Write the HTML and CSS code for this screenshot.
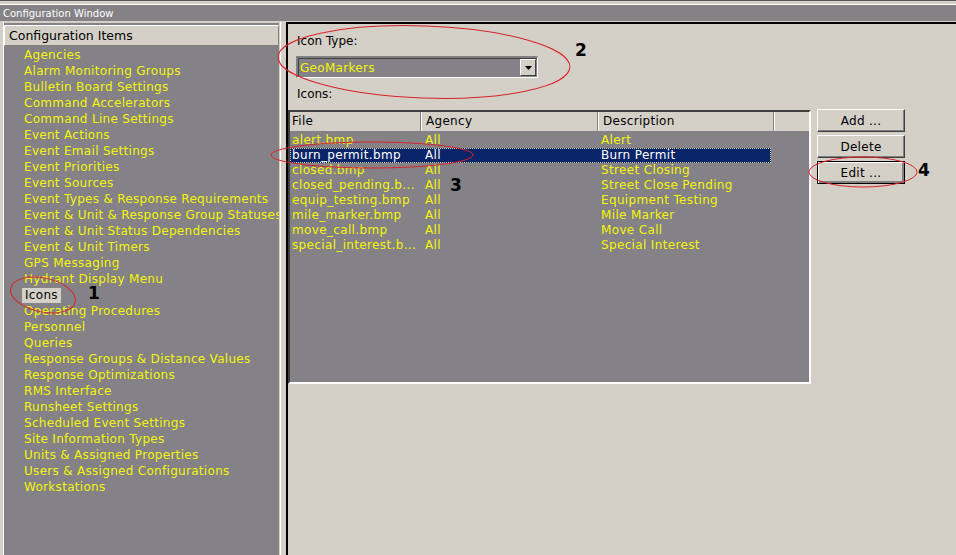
FILE: index.html
```html
<!DOCTYPE html>
<html lang="en">
<head>
    <meta charset="UTF-8">
    <title>Configuration Window</title>
    <link rel="stylesheet" href="styles.css">
</head>
<body>
    <div class="window">
        <div class="top-edge"></div>
        <div class="titlebar">Configuration Window</div>
        <div class="main">
            <div class="left-pane">
                <div class="pane-header">Configuration Items</div>
                <ul class="items">
                    <li>Agencies</li>
                    <li>Alarm Monitoring Groups</li>
                    <li>Bulletin Board Settings</li>
                    <li>Command Accelerators</li>
                    <li>Command Line Settings</li>
                    <li>Event Actions</li>
                    <li>Event Email Settings</li>
                    <li>Event Priorities</li>
                    <li>Event Sources</li>
                    <li>Event Types &amp; Response Requirements</li>
                    <li>Event &amp; Unit &amp; Response Group Statuses</li>
                    <li>Event &amp; Unit Status Dependencies</li>
                    <li>Event &amp; Unit Timers</li>
                    <li>GPS Messaging</li>
                    <li>Hydrant Display Menu</li>
                    <li><span class="selected-item">Icons</span></li>
                    <li>Operating Procedures</li>
                    <li>Personnel</li>
                    <li>Queries</li>
                    <li>Response Groups &amp; Distance Values</li>
                    <li>Response Optimizations</li>
                    <li>RMS Interface</li>
                    <li>Runsheet Settings</li>
                    <li>Scheduled Event Settings</li>
                    <li>Site Information Types</li>
                    <li>Units &amp; Assigned Properties</li>
                    <li>Users &amp; Assigned Configurations</li>
                    <li>Workstations</li>
                </ul>
            </div>
            <div class="splitter"></div>
            <div class="right-pane">
                <div class="field-label first">Icon Type:</div>
                <div class="combo">
                    <span class="combo-text">GeoMarkers</span>
                    <span class="combo-btn">
                        <svg width="7" height="4" viewBox="0 0 7 4"><path d="M0 0h7L3.5 4z" fill="#000"/></svg>
                    </span>
                </div>
                <div class="field-label icons-label">Icons:</div>
                <div class="list-row">
                    <div class="listview">
                        <div class="lv-header">
                            <div class="col c1">File</div>
                            <div class="col c2">Agency</div>
                            <div class="col c3">Description</div>
                            <div class="col c4"></div>
                        </div>
                        <div class="lv-body">
                            <div class="lv-row"><span class="c1">alert.bmp</span><span class="c2">All</span><span class="c3">Alert</span></div>
                            <div class="lv-row selected"><span class="c1">burn_permit.bmp</span><span class="c2">All</span><span class="c3">Burn Permit</span></div>
                            <div class="lv-row"><span class="c1">closed.bmp</span><span class="c2">All</span><span class="c3">Street Closing</span></div>
                            <div class="lv-row"><span class="c1">closed_pending.b...</span><span class="c2">All</span><span class="c3">Street Close Pending</span></div>
                            <div class="lv-row"><span class="c1">equip_testing.bmp</span><span class="c2">All</span><span class="c3">Equipment Testing</span></div>
                            <div class="lv-row"><span class="c1">mile_marker.bmp</span><span class="c2">All</span><span class="c3">Mile Marker</span></div>
                            <div class="lv-row"><span class="c1">move_call.bmp</span><span class="c2">All</span><span class="c3">Move Call</span></div>
                            <div class="lv-row"><span class="c1">special_interest.b...</span><span class="c2">All</span><span class="c3">Special Interest</span></div>
                        </div>
                    </div>
                    <div class="buttons">
                        <button>Add ...</button>
                        <button>Delete</button>
                        <button class="default">Edit ...</button>
                    </div>
                </div>
            </div>
        </div>

        <!-- hand drawn annotations on top of the screenshot -->
        <svg class="annotations" width="956" height="555" viewBox="0 0 956 555">
            <g fill="none" stroke="#d8222a" stroke-width="1">
                <ellipse cx="43" cy="295" rx="33" ry="17" transform="rotate(12 43 295)"/>
                <ellipse cx="424" cy="62" rx="146" ry="36" transform="rotate(2 424 62)"/>
                <ellipse cx="372" cy="155" rx="101" ry="13"/>
                <ellipse cx="863" cy="172" rx="54" ry="15"/>
            </g>
        </svg>
        <span class="mark m1">1</span>
        <span class="mark m2">2</span>
        <span class="mark m3">3</span>
        <span class="mark m4">4</span>
    </div>
</body>
</html>
```

FILE: styles.css
```css
body {
    margin: 0;
    background: #d4d0c8;
    font-family: "DejaVu Sans", Verdana, sans-serif;
    font-size: 12px;
    overflow: hidden;
}
.window {
    position: relative;
    width: 956px;
    height: 555px;
    overflow: hidden;
}
.top-edge {
    height: 3px;
    border-top: 1px solid #555;
    background: #d4d0c8;
    border-bottom: 1px solid #fff;
}
.titlebar {
    height: 16px;
    line-height: 17px;
    background: #848284;
    color: #fff;
    font-size: 10px;
    padding-left: 3px;
    border-bottom: 1px solid #d4d0c8;
}
.main {
    display: flex;
    height: 533px;
}
.left-pane {
    width: 275px;
    margin-left: 3px;
    border-left: 1px solid #fff;
    border-top: 1px solid #d4d0c8;
    background: #848286;
    display: flex;
    flex-direction: column;
}
.pane-header {
    height: 19px;
    line-height: 20px;
    margin-top: 2px;
    background: #d4d0c8;
    border-top: 1px solid #fff;
    border-left: 1px solid #fff;
    border-bottom: 1px solid #808080;
    border-right: 1px solid #808080;
    font-size: 12.5px;
    padding-left: 4px;
    color: #000;
}
.items {
    list-style: none;
    margin: 0;
    padding: 1px 0 0 20px;
    color: #f4f40a;
    white-space: nowrap;
    overflow: hidden;
    letter-spacing: 0.3px;
}
.items li {
    height: 16px;
    line-height: 16px;
}
.selected-item {
    display: inline-block;
    background: #d4d0c8;
    color: #000;
    padding: 0 3px;
    margin-left: -2px;
    line-height: 15px;
}
.splitter {
    width: 4px;
    border-left: 1px solid #fff;
    border-right: 1px solid #d4d0c8;
    background: #d4d0c8;
    margin-left: 1px;
}
.right-pane {
    flex: 1;
    border-top: 2px solid #000;
    border-left: 2px solid #000;
}
.field-label {
    padding-left: 9px;
    height: 14px;
    line-height: 14px;
    margin-top: 8px;
}
.field-label.first {
    margin-top: 10px;
}
.field-label.icons-label {
    margin-top: 9px;
}
.combo {
    margin: 8px 0 0 8px;
    width: 239px;
    height: 19px;
    background: #848286;
    border-top: 2px solid #808080;
    border-left: 2px solid #808080;
    border-bottom: 1px solid #fff;
    border-right: 1px solid #fff;
    box-shadow: inset 1px 1px 0 #404040;
    display: flex;
    align-items: center;
    justify-content: space-between;
}
.combo-text {
    color: #f4f40a;
    padding-left: 2px;
    letter-spacing: 0.3px;
}
.combo-btn {
    width: 14px;
    height: 15px;
    margin-right: 1px;
    background: #d4d0c8;
    border-top: 1px solid #fff;
    border-left: 1px solid #fff;
    border-right: 1px solid #404040;
    border-bottom: 1px solid #404040;
    display: flex;
    align-items: center;
    justify-content: center;
}
.list-row {
    display: flex;
    margin-top: 8px;
}
.listview {
    width: 519px;
    height: 270px;
    margin-top: 1px;
    border-top: 2px solid #404040;
    border-left: 2px solid #404040;
    border-bottom: 2px solid #fff;
    border-right: 2px solid #fff;
    background: #848286;
}
.lv-header {
    display: flex;
    height: 19px;
    background: #d4d0c8;
    border-bottom: 2px solid #848286;
}
.lv-header .col {
    height: 19px;
    line-height: 19px;
    border-right: 1px solid #808080;
    box-shadow: 1px 0 0 #fff;
    color: #000;
    letter-spacing: 0.3px;
}
.c1 { width: 128px; padding-left: 2px; }
.c2 { width: 171px; padding-left: 5px; }
.c3 { width: 170px; padding-left: 5px; }
.lv-header .c4 { flex: 1; border-right: none; box-shadow: none; }
.lv-row {
    display: flex;
    height: 15px;
    line-height: 15px;
    color: #f4f40a;
    white-space: nowrap;
    width: 481px;
    letter-spacing: 0.35px;
}
.lv-row span {
    display: block;
    flex: none;
}
.lv-row.selected {
    background: #0a246a;
    color: #fff;
    outline: 1px dotted #d8d8a0;
    outline-offset: -1px;
}
.buttons {
    display: flex;
    flex-direction: column;
    gap: 3px;
    margin-left: 6px;
}
button {
    width: 88px;
    height: 23px;
    font-family: inherit;
    font-size: 12px;
    letter-spacing: 0.3px;
    color: #000;
    background: #d4d0c8;
    border-top: 1px solid #fff;
    border-left: 1px solid #fff;
    border-right: 1px solid #404040;
    border-bottom: 1px solid #404040;
    box-shadow: inset -1px -1px 0 #808080;
    padding: 0;
}
button.default {
    border: 1px solid #000;
    box-shadow: inset 1px 1px 0 #fff, inset -2px -2px 0 #808080;
}
.annotations {
    position: absolute;
    left: 0;
    top: 0;
    pointer-events: none;
}
.mark {
    position: absolute;
    font-family: "DejaVu Sans", Verdana, sans-serif;
    font-weight: bold;
    font-size: 17px;
    line-height: 17px;
    color: #000;
}
.m1 { left: 88px; top: 285px; }
.m2 { left: 575px; top: 42px; }
.m3 { left: 450px; top: 177px; }
.m4 { left: 918px; top: 162px; }
```
